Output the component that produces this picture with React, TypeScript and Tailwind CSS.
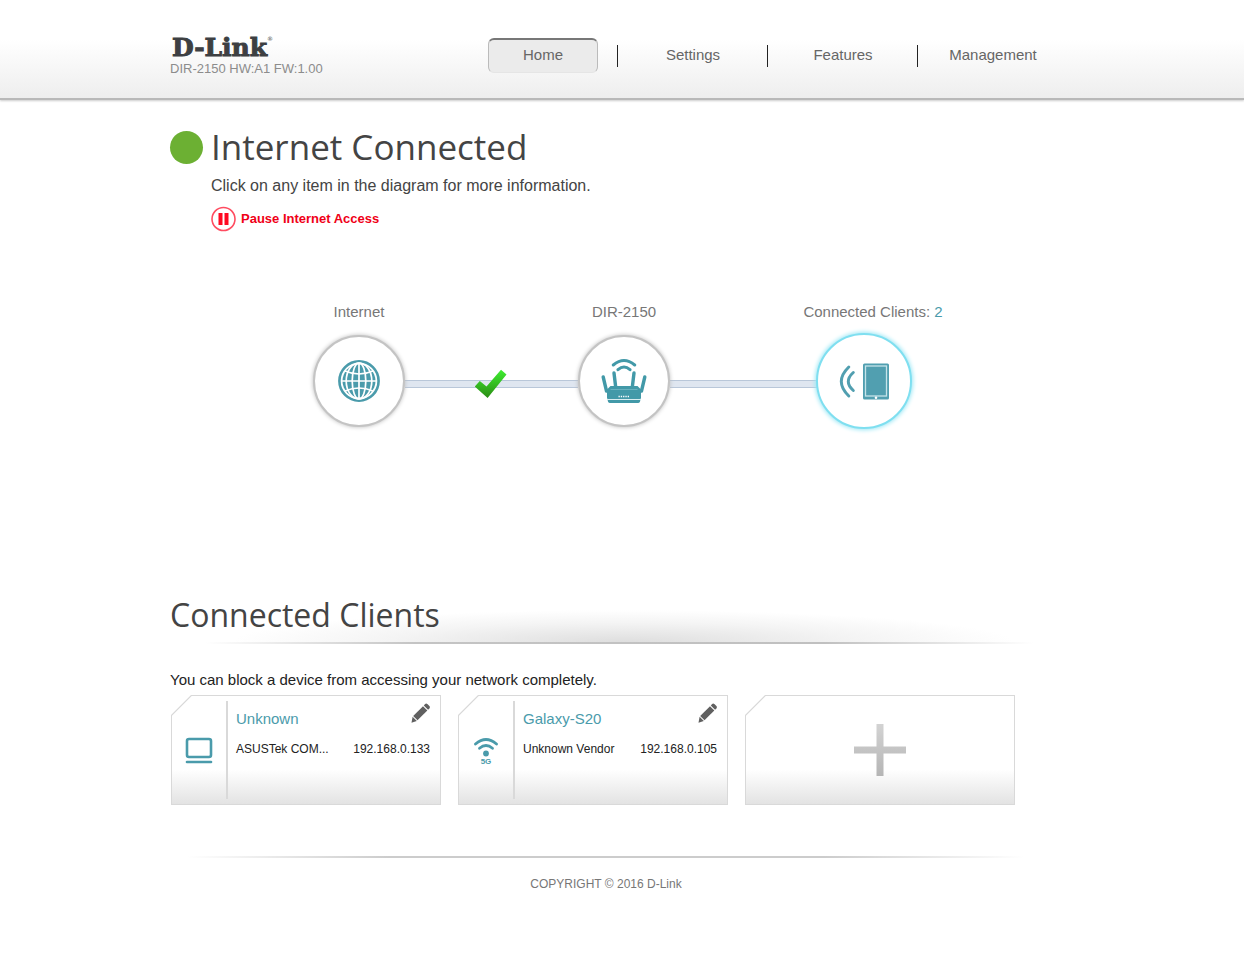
import React, {useState} from "react";

type Client = {
    name: string
    vendor: string
    ip: string
    wireless: boolean
}

const navItems = ["Home", "Settings", "Features", "Management"];

const clients: Client[] = [
    {name: "Unknown", vendor: "ASUSTek COM...", ip: "192.168.0.133", wireless: false},
    {name: "Galaxy-S20", vendor: "Unknown Vendor", ip: "192.168.0.105", wireless: true},
];

function GlobeIcon() {
    return (
        <svg viewBox="0 0 42 42" className="size-[42px]" aria-hidden="true">
            <circle cx="21" cy="21" r="19.6" fill="#fff" stroke="#4a9bab" strokeWidth="2.6"/>
            <circle cx="21" cy="21" r="16.5" fill="#4a9bab"/>
            <g fill="none" stroke="#fff" strokeWidth="1.7">
                <path d="M21 4v34M4 21h34"/>
                <ellipse cx="21" cy="21" rx="6.8" ry="18"/>
                <ellipse cx="21" cy="21" rx="12.8" ry="18"/>
                <path d="M7 11q14 6 28 0M7 31q14-6 28 0"/>
            </g>
        </svg>
    )
}

function RouterIcon() {
    return (
        <svg viewBox="0 0 46 46" className="size-[46px]" aria-hidden="true">
            <g fill="none" stroke="#4299a8" strokeLinecap="round">
                <path d="M12.3 7q10.7-9 21.4 0M17 11.7q6-5.5 12 0" strokeWidth="3"/>
                <path d="M13 15l1.8 15M33 15l-1.8 15M2.2 19l3.3 14M43.8 19l-3.3 14" strokeWidth="3.4"/>
            </g>
            <path d="M9.5 28h27l3.5 3.5v8l-1 4q-.5 1.5-2 1.5H9q-1.5 0-2-1.5l-1-4v-8z" fill="#4299a8"/>
            <path d="M6 41.5h34" stroke="#d8edf0" strokeWidth="1"/>
            <path d="M17.5 38.5h11" stroke="#fff" strokeWidth="1.4" strokeDasharray="1.3 1"/>
            <path d="M9.5 31.5h27" stroke="#68b2bf" strokeWidth="1"/>
        </svg>
    )
}

function TabletIcon() {
    return (
        <svg viewBox="0 0 52 40" className="w-[52px] h-10" aria-hidden="true">
            <g fill="none" stroke="#519fb0" strokeLinecap="round" strokeWidth="3">
                <path d="M10.8 6q-15 14.5 0 29"/>
                <path d="M15.3 11.5q-10 9 0 18"/>
            </g>
            <rect x="25" y="2.5" width="26" height="36" rx="1.5" fill="#519fb0"/>
            <rect x="27.5" y="5" width="21" height="30" fill="none" stroke="#c5e4ea" strokeWidth="1.3"/>
            <circle cx="38" cy="36.8" r="1.3" fill="#fff"/>
        </svg>
    )
}

function CheckIcon() {
    return (
        <svg viewBox="2 0 34 32" className="absolute left-1/2 top-1/2 -translate-x-1/2 -translate-y-1/2 w-[34px] h-8"
             aria-hidden="true">
            <defs>
                <linearGradient id="check" x1="0" y1="0" x2="0" y2="1">
                    <stop offset="0" stopColor="#3fee31"/>
                    <stop offset="1" stopColor="#2b8b14"/>
                </linearGradient>
            </defs>
            <path d="M1.8 18.5l5-5.5 6.7 5.5L28 1.8l5.5 4.7L14.6 30z" fill="url(#check)"/>
        </svg>
    )
}

function LaptopIcon() {
    return (
        <svg viewBox="0 0 28 28" className="size-7" fill="none" stroke="#4a9bab" aria-hidden="true">
            <rect x="2" y="3" width="24" height="18" rx="2" strokeWidth="2.6"/>
            <path d="M2 26h24" strokeWidth="2.6" strokeLinecap="round"/>
        </svg>
    )
}

function WifiIcon() {
    return (
        <svg viewBox="0 0 26 32" className="w-[26px] h-8" aria-hidden="true">
            <g fill="none" stroke="#4a9bab" strokeWidth="2.8" strokeLinecap="round">
                <path d="M2.5 10q10.5-9 21 0"/>
                <path d="M6.5 14.3q6.5-5.5 13 0"/>
            </g>
            <circle cx="13" cy="19.5" r="2.9" fill="#4a9bab"/>
            <text x="13" y="30" textAnchor="middle" fontSize="8" fontWeight="bold" fill="#4a9bab">5G</text>
        </svg>
    )
}

function PencilIcon() {
    return (
        <svg viewBox="0 0 20 20" className="size-5" fill="#606060" aria-hidden="true">
            <path d="M13.8 2.4l1.3-1.3q1.2-1 2.3 0l2 2q1 1.2 0 2.3l-1.3 1.3z"/>
            <path d="M13 3.2l4.3 4.3L7.5 17.3 3.2 13z"/>
            <path d="M2.6 13.8l4.2 4.2-5.3 1.7z"/>
        </svg>
    )
}

// Card with the top left corner cut off
function Card({children}: {children: React.ReactNode}) {
    return (
        <div
            className="w-[270px] h-[110px] p-px bg-[#d9d9d9] [clip-path:polygon(20px_0,100%_0,100%_100%,0_100%,0_20px)]">
            <div
                className="flex h-full bg-white bg-linear-to-b from-white from-68% to-[#e3e3e3] [clip-path:polygon(20px_0,100%_0,100%_100%,0_100%,0_20px)]">
                {children}
            </div>
        </div>
    )
}

function ClientCard({client}: {client: Client}) {
    return (
        <Card>
            <div className="flex w-[54px] justify-center items-center">
                {client.wireless ? <WifiIcon/> : <LaptopIcon/>}
            </div>
            <div className="w-0.5 my-[5px] bg-[#d9d9d9]"></div>
            <div className="flex-1 pl-2 pr-[10px] pt-[7px]">
                <div className="flex justify-between">
                    <div className="text-[15px] leading-8 text-[#4a9bab]">{client.name}</div>
                    <button type="button" aria-label={"Edit " + client.name} className="self-start">
                        <PencilIcon/>
                    </button>
                </div>
                <div className="flex justify-between text-xs leading-7 text-[#222]">
                    <div>{client.vendor}</div>
                    <div>{client.ip}</div>
                </div>
            </div>
        </Card>
    )
}

function DiagramNode(props: {label: React.ReactNode, selected: boolean, onClick: () => void, children: React.ReactNode}) {
    return (
        <button type="button" onClick={props.onClick} className="relative z-10 flex w-24 flex-col items-center">
            <span className="text-[15px] leading-5 text-[#777] whitespace-nowrap">{props.label}</span>
            <span className="flex size-24 mt-[11px] justify-center items-center">
                <span className={props.selected
                    ? "flex size-24 justify-center items-center rounded-full bg-white border-2 border-[#7fdff0] shadow-[0_0_4px_1px_#9be7f5]"
                    : "flex size-[92px] justify-center items-center rounded-full bg-white border-2 border-[#c4c4c4] shadow-[0_0_4px_#bbb]"}>
                    {props.children}
                </span>
            </span>
        </button>
    )
}

function App() {
    const [page, setPage] = useState("Home");
    const [selected, setSelected] = useState("clients");

    return (
        <div className="min-h-screen bg-white font-['Liberation_Sans',Arial,sans-serif]">
            <header
                className="h-[100px] bg-linear-to-b from-white from-40% to-[#eeeeee] border-b-2 border-[#b9b9b9] shadow-[0_1px_2px_#ccc]">
                <div className="flex max-w-[904px] mx-auto justify-between">
                    <div className="pt-9">
                        <a href="#"
                           className="flex pl-0.5 font-['DejaVu_Serif',serif] text-[25px] leading-6 font-bold text-[#3d3f42] [-webkit-text-stroke:1px_#3d3f42]">
                            D-Link
                            <sup className="self-start text-[6px] leading-3 font-normal [-webkit-text-stroke:0]">®</sup>
                        </a>
                        <div className="text-[13px] leading-[18px] text-[#8c8c8c]">DIR-2150 HW:A1 FW:1.00</div>
                    </div>
                    <nav className="pt-[38px] pr-1.5">
                        <ul className="flex">
                            {navItems.map((item, index) => (
                                <li key={item} className="flex w-[150px] items-center">
                                    <a href={"#" + item} onClick={() => setPage(item)}
                                       className={item === page
                                           ? "w-[110px] ml-5 mr-[19px] h-[35px] rounded-md border border-[#bbb] border-t-2 border-t-[#777] border-b-[#e5e5e5] bg-[#ebebeb] text-center text-[15px] leading-[29px] text-[#666]"
                                           : "w-[110px] ml-5 mr-[19px] h-[35px] text-center text-[15px] leading-[33px] text-[#666]"}>
                                        {item}
                                    </a>
                                    {index < navItems.length - 1 && <span className="w-px h-[22px] bg-[#222]"></span>}
                                </li>
                            ))}
                        </ul>
                    </nav>
                </div>
            </header>

            <main className="max-w-[904px] mx-auto pr-8">
                <section className="pt-[23px]">
                    <div className="flex items-center gap-2">
                        <span className="size-[33px] rounded-full bg-[#6cb033]"></span>
                        <h1 className="font-['Open_Sans','Noto_Sans',sans-serif] text-[35px] leading-[48px] font-normal text-[#444]">
                            Internet Connected
                        </h1>
                    </div>
                    <div className="pl-[41px]">
                        <p className="text-base leading-6 mt-[3px] text-[#444]">
                            Click on any item in the diagram for more information.
                        </p>
                        <button type="button" className="flex mt-2 gap-1 items-center text-[13px] font-bold text-[#f00017]">
                            <svg viewBox="0 0 26 26" className="size-[26px]" aria-hidden="true">
                                <circle cx="12.5" cy="13" r="11.5" fill="#fff" stroke="#ff4c60" strokeWidth="1.6"/>
                                <path d="M7.5 7h4v12h-4zM13.5 7h4v12h-4z" fill="#ff0a22"/>
                            </svg>
                            Pause Internet Access
                        </button>
                    </div>
                </section>

                <section className="flex mt-[70px] pl-[141px] items-end">
                    <DiagramNode label="Internet" selected={selected === "internet"}
                                 onClick={() => setSelected("internet")}>
                        <GlobeIcon/>
                    </DiagramNode>
                    <div className="relative w-[173px] h-2 -mx-0.5 mb-[41px] border-y border-[#b9c7d9] bg-[#dfe6f0]">
                        <CheckIcon/>
                    </div>
                    <DiagramNode label="DIR-2150" selected={selected === "router"}
                                 onClick={() => setSelected("router")}>
                        <RouterIcon/>
                    </DiagramNode>
                    <div className="w-[148px] h-2 -mx-0.5 mb-[41px] border-y border-[#b9c7d9] bg-[#dfe6f0]"></div>
                    <DiagramNode label={<span className="pl-[18px]">Connected Clients: <span
                        className="text-[#4a9bab]">2</span></span>}
                                 selected={selected === "clients"} onClick={() => setSelected("clients")}>
                        <TabletIcon/>
                    </DiagramNode>
                </section>

                <section className="mt-[166px]">
                    <div
                        className="pb-[7px] bg-[radial-gradient(390px_32px_at_52%_100%,#dedede,#f4f4f4_60%,#ffffff)]">
                        <h2 className="font-['Open_Sans','Noto_Sans',sans-serif] text-[32px] leading-10 font-normal text-[#444]">
                            Connected Clients
                        </h2>
                    </div>
                    <div
                        className="h-0.5 bg-[linear-gradient(to_right,transparent_4%,#c4c4c4_28%,#c0c0c0_75%,transparent_99%)]"></div>
                    <p className="mt-[26px] text-[15px] leading-5 text-[#222]">
                        You can block a device from accessing your network completely.
                    </p>
                    <div className="flex flex-wrap mt-[5px] pl-px gap-[17px]">
                        {clients.map(client => <ClientCard key={client.name} client={client}/>)}
                        <Card>
                            <button type="button" aria-label="Add client"
                                    className="flex flex-1 justify-center items-center">
                                <svg viewBox="0 0 52 52" className="size-[52px]" aria-hidden="true">
                                    <defs>
                                        <linearGradient id="plus" x1="0" y1="0" x2="0" y2="1">
                                            <stop offset="0" stopColor="#d3d3d3"/>
                                            <stop offset="1" stopColor="#b5b5b5"/>
                                        </linearGradient>
                                    </defs>
                                    <path d="M22.5 0h7v22.5H52v7H29.5V52h-7V29.5H0v-7h22.5z" fill="url(#plus)"/>
                                </svg>
                            </button>
                        </Card>
                    </div>
                </section>

                <footer className="mt-[51px]">
                    <div
                        className="h-0.5 bg-[linear-gradient(to_right,transparent_2%,#cccccc_25%,#cccccc_75%,transparent_98%)]"></div>
                    <p className="mt-4 text-center text-xs leading-5 text-[#777]">COPYRIGHT © 2016 D-Link</p>
                </footer>
            </main>
        </div>
    )
}

export default App;
